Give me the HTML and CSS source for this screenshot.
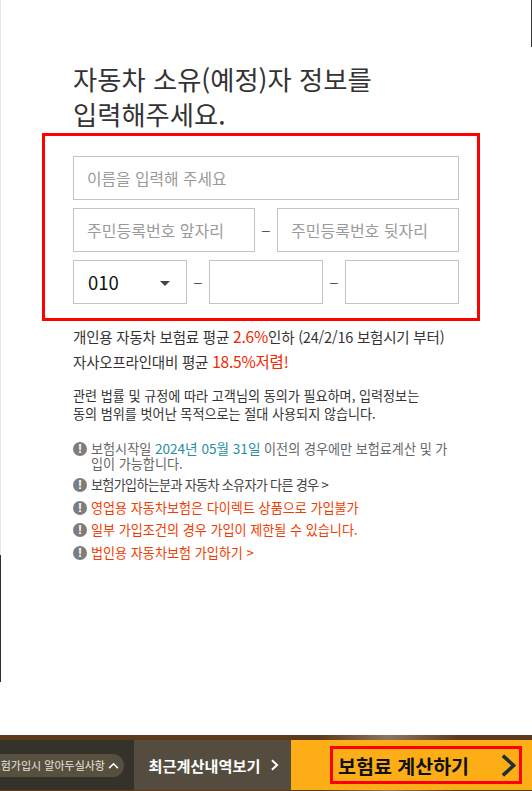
FILE: index.html
```html
<!DOCTYPE html>
<html lang="ko">
<head>
<meta charset="utf-8">
<title>자동차 소유(예정)자 정보</title>
<link rel="stylesheet" href="styles.css">
</head>
<body>
<div class="page">
  <div class="edge-left"></div>
  <div class="edge-left-dark"></div>
  <div class="edge-right"></div>
  <main class="content">
    <h1 class="title">자동차 소유(예정)자 정보를<br>입력해주세요.</h1>
    <form class="form">
      <div class="highlight"></div>
      <div class="field name">이름을 입력해 주세요</div>
      <div class="row">
        <div class="field half">주민등록번호 앞자리</div>
        <span class="dash wide">–</span>
        <div class="field half">주민등록번호 뒷자리</div>
      </div>
      <div class="row">
        <div class="field phone select"><span>010</span><i class="caret"></i></div>
        <span class="dash">–</span>
        <div class="field phone"></div>
        <span class="dash">–</span>
        <div class="field phone"></div>
      </div>
    </form>
    <p class="promo">개인용 자동차 보험료 평균 <em>2.6%</em>인하 (24/2/16 보험시기 부터)<br>자사오프라인대비 평균 <em>18.5%저렴!</em></p>
    <p class="consent">관련 법률 및 규정에 따라 고객님의 동의가 필요하며, 입력정보는<br>동의 범위를 벗어난 목적으로는 절대 사용되지 않습니다.</p>
    <ul class="notes">
      <li><i class="bang">!</i><span class="wrap">보험시작일 <b class="teal">2024년 05월 31일</b> 이전의 경우에만 보험료계산 및 가입이 가능합니다.</span></li>
      <li class="dark"><i class="bang">!</i><span>보험가입하는분과 자동차 소유자가 다른 경우 &gt;</span></li>
      <li class="red"><i class="bang">!</i><span>영업용 자동차보험은 다이렉트 상품으로 가입불가</span></li>
      <li class="red"><i class="bang">!</i><span>일부 가입조건의 경우 가입이 제한될 수 있습니다.</span></li>
      <li class="red"><i class="bang">!</i><span>법인용 자동차보험 가입하기 &gt;</span></li>
    </ul>
  </main>
  <footer class="bar">
    <div class="bar-info"><span class="pill"><span class="pill-text">보험가입시 알아두실사항</span>
      <svg class="chev-up" viewBox="0 0 12 8" width="11" height="7"><path d="M1 7 6 2l5 5" fill="none" stroke="#fff" stroke-width="1.8"/></svg></span></div>
    <div class="bar-recent">최근계산내역보기
      <svg viewBox="0 0 10 14" width="9" height="12"><path d="M2 1.5 8 7l-6 5.5" fill="none" stroke="#fff" stroke-width="2.4"/></svg></div>
    <div class="bar-cta"><span class="cta-box"><span>보험료 계산하기</span>
      <svg viewBox="0 0 16 24" width="15" height="23"><path d="M2 1.5 13.5 12 2 22.5" fill="none" stroke="#1f2f3a" stroke-width="3.8"/></svg></span></div>
  </footer>
</div>
</body>
</html>
```
FILE: styles.css
```css
* { box-sizing: border-box; }
html, body { margin: 0; padding: 0; }
body { background: #fff; font-family: "Noto Sans CJK KR", "Noto Sans", sans-serif; color: #333; overflow: hidden; }
.page { position: relative; width: 532px; height: 791px; display: flex; flex-direction: column; overflow: hidden; }
.edge-left { position: absolute; left: 0; top: 0; width: 1px; height: 555px; background: #e8e8e2; }
.edge-left-dark { position: absolute; left: 0; top: 555px; width: 1px; height: 127px; background: #3a2e22; }
.edge-right { position: absolute; right: 0; top: 0; width: 1px; height: 47px; background: #333; }
.content { flex: 1; padding: 61px 73px 0; }
.title { margin: 0; font-size: 26.3px; line-height: 35px; font-weight: 400; color: #333; white-space: nowrap; }
.form { position: relative; margin-top: 25px; width: 386px; display: flex; flex-direction: column; gap: 8px; }
.highlight { position: absolute; left: -31px; top: -23px; width: 438px; height: 188px; border: 3px solid #f00; pointer-events: none; }
.field { height: 44px; border: 1px solid #c4c4c4; background: #fff; padding: 0 13px; font-size: 16px; line-height: 44px; color: #9a9a9a; display: flex; align-items: center; white-space: nowrap; }
.name { width: 386px; font-size: 15.8px; padding-top: 2px; }
.row { display: flex; align-items: center; }
.half { width: 182px; }
.phone { width: 114px; }
.select { justify-content: space-between; color: #111; font-size: 18.5px; padding: 0 16px 0 14px; }
.caret { width: 0; height: 0; border-left: 5px solid transparent; border-right: 5px solid transparent; border-top: 5px solid #444; margin-top: 2px; }
.dash { flex: 0 0 22px; width: 22px; text-align: center; color: #555; font-size: 14px; line-height: 1; font-family: "Liberation Sans", sans-serif; }
.promo { margin: 20px 0 0; font-size: 14.5px; line-height: 24px; color: #333; white-space: nowrap; letter-spacing: -0.2px; }
.promo em { font-style: normal; color: #f02800; font-size: 15.5px; }
.consent { margin: 13px 0 0; font-size: 13.1px; line-height: 18px; color: #333; white-space: nowrap; }
.notes { list-style: none; margin: 18px 0 0; padding: 0; width: 378px; font-size: 13.1px; line-height: 15px; color: #666; }
.notes li { display: flex; gap: 4px; margin-bottom: 7.7px; }
.notes li:first-child { margin-bottom: 6px; }
.wrap { word-break: break-all; }
.notes li.dark { color: #444; letter-spacing: -0.7px; }
.notes li.red { color: #f03c00; }
.bang { flex: 0 0 14px; width: 14px; height: 14px; margin-top: 1px; border-radius: 50%; background: #7d7d7d; color: #fff; font-style: normal; font-weight: 700; font-size: 12px; line-height: 14px; text-align: center; font-family: "Liberation Sans", sans-serif; letter-spacing: 0; }
.teal { font-weight: 400; color: #1f8fa8; font-size: 13.6px; }
.bar { flex: 0 0 auto; height: 56px; display: flex; background: #2f2c26; border-top: 5px solid #5e3a1c; border-bottom: 1px solid #3a2410; border-image: linear-gradient(90deg, #5e3a1c 0, #5e3a1c 60%, #8c7560 73%, #5e3a1c 86%) 1; }
.bar-info { width: 134px; background: #35322b; display: flex; align-items: center; justify-content: flex-end; padding-right: 10px; overflow: hidden; }
.pill { flex: none; display: flex; align-items: center; gap: 3px; height: 23px; border-radius: 12px; background: #57503f; color: #e8e6e0; font-size: 11px; line-height: 23px; padding: 0 5px 0 12px; white-space: nowrap; }
.bar-recent { width: 157px; background: #544d3f; color: #fff; font-size: 15.2px; font-weight: 700; display: flex; align-items: center; justify-content: center; gap: 10px; padding-left: 3px; white-space: nowrap; }
.bar-cta { flex: 1; background: #fdae17; display: flex; align-items: center; padding-left: 39px; }
.cta-box { width: 192px; height: 38px; border: 3px solid #f00; display: flex; align-items: center; justify-content: space-between; padding: 0 3px 0 5px; color: #111; font-size: 19.5px; font-weight: 700; white-space: nowrap; }
```
